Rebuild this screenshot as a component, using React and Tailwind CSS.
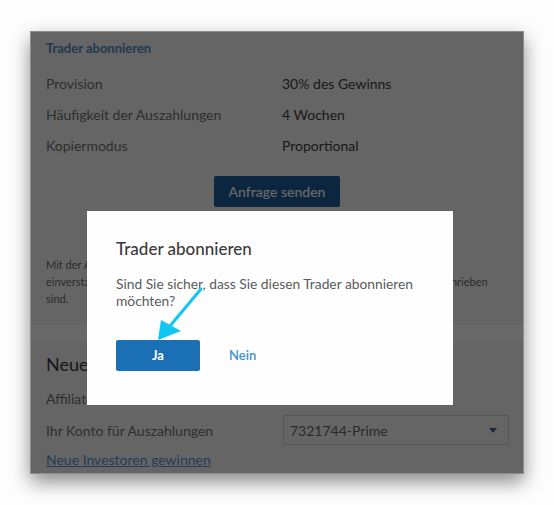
export default function App() {
  const rows = [
    ["Provision", "30% des Gewinns"],
    ["Häufigkeit der Auszahlungen", "4 Wochen"],
    ["Kopiermodus", "Proportional"],
  ];

  return (
    <main
      className="relative w-[554px] h-[505px] bg-[#fdfdfd] pt-[31px] pl-[30px] overflow-hidden"
      style={{ fontFamily: "Lato, 'Open Sans', sans-serif" }}
    >
      <div className="relative w-[494px] h-[443px] border border-[#8e8e8e] bg-white shadow-[0_8px_18px_rgba(0,0,0,0.45)]">
        {/* first card */}
        <section className="bg-[#f6f6f6] px-[15px] pt-[8px] h-[293px]">
          <h2 className="text-[13px] leading-[16px] font-bold text-[#4d8cc0]">Trader abonnieren</h2>
          <div className="mt-[12px]">
            {rows.map(([label, value]) => (
              <div key={label} className="grid grid-cols-[236px_1fr] h-[31px] items-center text-[14px]">
                <span className="text-[#707070]">{label}</span>
                <span className="text-[#3e3e3e]">{value}</span>
              </div>
            ))}
          </div>
          <div className="flex justify-center mt-[15px]">
            <button className="w-[126px] h-[31px] rounded-[2px] bg-[#1f5e9c] text-white text-[14px] font-medium">
              Anfrage senden
            </button>
          </div>
          <p className="mt-[49px] text-[11px] leading-[17px] text-[#6a6a6a]">
            Mit der Abonnierung dieses Traders erklären Sie sich mit allen Bedingungen
            <br />
            einverstanden, die in der Vereinbarung über das Copy Trading des Dienstes hier beschrieben
            <br />
            sind.
          </p>
        </section>

        <div className="h-[15px] bg-white" />

        {/* second card */}
        <section className="bg-[#f6f6f6] px-[15px] pt-[12px] h-[133px]">
          <h2 className="text-[18px] leading-[24px] text-[#3a3a3a]">Neue Investoren</h2>
          <div className="mt-[14px] h-[17px] text-[14px] leading-[17px] text-[#707070]">Affiliate-Link</div>
          <div className="mt-[8px] grid grid-cols-[237px_226px] items-center">
            <span className="text-[14px] text-[#707070]">Ihr Konto für Auszahlungen</span>
            <div className="h-[30px] border border-[#cfcfcf] bg-[#f6f6f6] flex items-center justify-between pl-[6px] pr-[11px]">
              <span className="text-[14px] text-[#666]">7321744-Prime</span>
              <span className="w-0 h-0 border-l-[4px] border-r-[4px] border-t-[5px] border-l-transparent border-r-transparent border-t-[#2f6c9f]" />
            </div>
          </div>
          <a href="#" className="block mt-[6px] text-[14px] leading-[17px] text-[#5d8fcf] underline">
            Neue Investoren gewinnen
          </a>
        </section>

        {/* dimming overlay */}
        <div className="absolute inset-0 bg-black/[0.59]" />

        {/* dialog */}
        <div className="absolute left-[56px] top-[179px] w-[366px] h-[194px] bg-[#fefefe] px-[29px] pt-[27px]">
          <h3 className="text-[17px] leading-[22px] font-medium text-[#3a3a3a]">Trader abonnieren</h3>
          <p className="mt-[15px] text-[13.8px] leading-[17px] text-[#5a5a5a]">
            Sind Sie sicher, dass Sie diesen Trader abonnieren
            <br />
            möchten?
          </p>
          <div className="mt-[31px] flex items-center">
            <button className="w-[84px] h-[31px] rounded-[2px] bg-[#1a6fb5] text-white text-[13px] font-bold">
              Ja
            </button>
            <button className="ml-[29px] text-[13px] font-semibold text-[#3b90d2]">Nein</button>
          </div>
        </div>
      </div>

      {/* annotation arrow */}
      <svg className="absolute left-0 top-0 pointer-events-none" width="554" height="505">
        <line x1="201" y1="289" x2="170" y2="326" stroke="#12c6f2" strokeWidth="3" strokeLinecap="round" />
        <polygon points="158,340 161,320 181,331" fill="#12c6f2" />
      </svg>
    </main>
  );
}
